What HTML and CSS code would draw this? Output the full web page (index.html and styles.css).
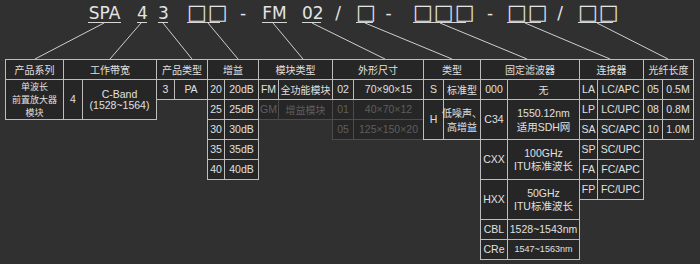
FILE: index.html
```html
<!DOCTYPE html>
<html lang="zh">
<head>
<meta charset="utf-8">
<title>SPA 型号说明</title>
<link rel="stylesheet" href="styles.css">
</head>
<body>
<div class="code">
  <div class="segs">
    <span class="seg u m88 w33">SPA</span>
    <span class="seg u m16 w10">4</span>
    <span class="seg u m11 w10">3</span>
    <span class="seg u m19 w33 box">□□</span>
    <span class="seg m20 w6">-</span>
    <span class="seg u m16 w25">FM</span>
    <span class="seg u m15 w19">02</span>
    <span class="seg m14 w6">/</span>
    <span class="seg u m15 w17 box">□</span>
    <span class="seg m12 w7">-</span>
    <span class="seg u m21 w53 box">□□□</span>
    <span class="seg m21 w6">-</span>
    <span class="seg u m14 w34 box">□□</span>
    <span class="seg m16 w6">/</span>
    <span class="seg u m15 w35 box">□□</span>
  </div>
  <svg class="links" width="700" height="60" viewBox="0 0 700 60">
    <g stroke="#cfcfcf" stroke-width="1" fill="none">
      <line x1="104" y1="23" x2="35" y2="59"/>
      <line x1="141" y1="23" x2="110" y2="59"/>
      <line x1="163" y1="23" x2="192" y2="59"/>
      <line x1="208" y1="23" x2="238" y2="59"/>
      <line x1="273" y1="23" x2="303" y2="59"/>
      <line x1="312" y1="23" x2="385" y2="59"/>
      <line x1="365" y1="23" x2="452" y2="59"/>
      <line x1="440" y1="23" x2="527" y2="59"/>
      <line x1="525" y1="23" x2="610" y2="59"/>
      <line x1="597" y1="23" x2="668" y2="59"/>
    </g>
  </svg>
</div>

<div class="table">
  <div class="th">产品系列</div>
  <div class="th">工作带宽</div>
  <div class="th">产品类型</div>
  <div class="th">增益</div>
  <div class="th">模块类型</div>
  <div class="th">外形尺寸</div>
  <div class="th">类型</div>
  <div class="th">固定滤波器</div>
  <div class="th">连接器</div>
  <div class="th">光纤长度</div>

  <div class="grp g-series">
    <div class="td tall l3 cjk">单波长<br>前置放大器<br>模块</div>
  </div>
  <div class="grp g-band">
    <div class="td tall">4</div>
    <div class="td tall l11">C-Band<br>(1528~1564)</div>
  </div>
  <div class="grp g-ptype">
    <div class="td">3</div>
    <div class="td">PA</div>
  </div>
  <div class="grp g-gain">
    <div class="td">20</div><div class="td">20dB</div>
    <div class="td">25</div><div class="td">25dB</div>
    <div class="td">30</div><div class="td">30dB</div>
    <div class="td">35</div><div class="td">35dB</div>
    <div class="td">40</div><div class="td">40dB</div>
  </div>
  <div class="grp g-mod">
    <div class="td">FM</div><div class="td cjk">全功能模块</div>
    <div class="td dim">GM</div><div class="td dim cjk">增益模块</div>
  </div>
  <div class="grp g-size">
    <div class="td">02</div><div class="td">70×90×15</div>
    <div class="td dim">01</div><div class="td dim">40×70×12</div>
    <div class="td dim">05</div><div class="td dim">125×150×20</div>
  </div>
  <div class="grp g-type">
    <div class="td">S</div><div class="td cjk">标准型</div>
    <div class="td tall">H</div><div class="td tall cjk l14">低噪声、<br>高增益</div>
  </div>
  <div class="grp g-filter">
    <div class="td">000</div><div class="td cjk">无</div>
    <div class="td tall">C34</div><div class="td tall l14">1550.12nm<br>适用SDH网</div>
    <div class="td tall">CXX</div><div class="td tall l13">100GHz<br>ITU标准波长</div>
    <div class="td tall">HXX</div><div class="td tall l13">50GHz<br>ITU标准波长</div>
    <div class="td">CBL</div><div class="td">1528~1543nm</div>
    <div class="td">CRe</div><div class="td small">1547~1563nm</div>
  </div>
  <div class="grp g-conn">
    <div class="td">LA</div><div class="td">LC/APC</div>
    <div class="td">LP</div><div class="td">LC/UPC</div>
    <div class="td">SA</div><div class="td">SC/APC</div>
    <div class="td">SP</div><div class="td">SC/UPC</div>
    <div class="td">FA</div><div class="td">FC/APC</div>
    <div class="td">FP</div><div class="td">FC/UPC</div>
  </div>
  <div class="grp g-len">
    <div class="td">05</div><div class="td">0.5M</div>
    <div class="td">08</div><div class="td">0.8M</div>
    <div class="td">10</div><div class="td">1.0M</div>
  </div>
</div>
</body>
</html>
```

FILE: styles.css
```css
html, body {
  margin: 0;
  padding: 0;
  background: #303030;
}

body {
  width: 700px;
  height: 264px;
  overflow: hidden;
  color: #e2e2e2;
  font-family: "Liberation Sans", "Noto Sans CJK SC", sans-serif;
}

/* ---------- model code line ---------- */
.code {
  position: relative;
  height: 60px;
}

.segs {
  display: flex;
  padding-top: 4px;
}

.seg {
  display: block;
  height: 18px;
  line-height: 18px;
  font-family: "DejaVu Sans", sans-serif;
  font-size: 17px;
  text-align: center;
  color: #e4e4e4;
  white-space: nowrap;
  overflow: visible;
}

.seg.u {
  border-bottom: 1px solid #d6d6d6;
}

.seg.box {
  font-size: 21px;
  line-height: 16px;
  letter-spacing: 1px;
}

.m11 { margin-left: 11px; }
.m12 { margin-left: 12px; }
.m14 { margin-left: 14px; }
.m15 { margin-left: 15px; }
.m16 { margin-left: 16px; }
.m19 { margin-left: 19px; }
.m20 { margin-left: 20px; }
.m21 { margin-left: 21px; }
.m88 { margin-left: 88px; }

.w6 { width: 6px; }
.w7 { width: 7px; }
.w10 { width: 10px; }
.w17 { width: 17px; }
.w19 { width: 19px; }
.w25 { width: 25px; }
.w33 { width: 33px; }
.w34 { width: 34px; }
.w35 { width: 35px; }
.w53 { width: 53px; }

.links {
  position: absolute;
  left: 0;
  top: 0;
}

/* ---------- table ---------- */
.table {
  display: grid;
  grid-template-columns: 58px 93px 51px 51px 74px 91px 57px 99px 64px 50px;
  grid-template-rows: 20px auto;
  margin-left: 6px;
}

.th,
.td {
  display: flex;
  align-items: center;
  justify-content: center;
  text-align: center;
  margin: -1px 0 0 -1px;
  border: 1px solid #bdbdbd;
  background: #262626;
  color: #e0e0e0;
  font-size: 10.5px;
  line-height: 13px;
  white-space: nowrap;
  z-index: 1;
}

.th {
  font-family: "Noto Sans CJK SC", sans-serif;
  font-size: 10px;
}

.grp {
  display: grid;
  grid-auto-rows: 20px;
  align-self: start;
}

.g-series { grid-template-columns: 58px; }
.g-band   { grid-template-columns: 19px 74px; }
.g-ptype  { grid-template-columns: 18px 33px; }
.g-gain   { grid-template-columns: 17px 34px; }
.g-mod    { grid-template-columns: 20px 54px; }
.g-size   { grid-template-columns: 21px 70px; }
.g-type   { grid-template-columns: 20px 37px; }
.g-filter { grid-template-columns: 27px 72px; }
.g-conn   { grid-template-columns: 18px 46px; }
.g-len    { grid-template-columns: 19px 31px; }

.tall { grid-row: span 2; }

.cjk {
  font-family: "Noto Sans CJK SC", sans-serif;
  font-size: 10px;
}

.l3  { font-size: 9px; line-height: 13px; }
.l11 { line-height: 11px; }
.l13 { line-height: 13px; }
.l14 { line-height: 14px; }

.small { font-size: 9px; }

.dim {
  border-color: #4c4c4c;
  color: #5e5e5e;
  z-index: 0;
}
```
